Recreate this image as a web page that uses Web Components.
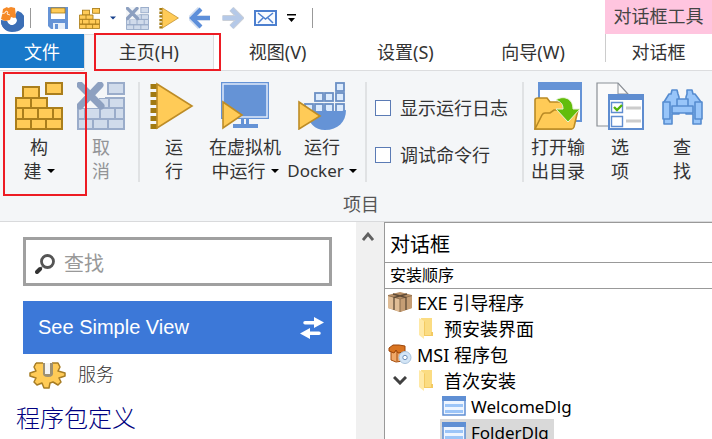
<!DOCTYPE html>
<html lang="zh-CN">
<head>
<meta charset="utf-8">
<title>对话框</title>
<style>
  html, body {
    margin: 0;
    height: 100%;
    overflow: hidden;
    background: #fff;
    font-family: "Noto Sans", "Noto Sans CJK SC", sans-serif;
    font-size: 18px;
    color: #333;
  }
</style>
</head>
<body>
<app-window></app-window>

<script>
const triangle = (points) =>
  `<polygon points="${points}" fill="#ffcb57" stroke="#bd8c26" stroke-width="1.6"/>`;

const lowerRows = `<path d="M1 26h46v11H1zM8 26v11M23 26v11M38 26v11M1 37h46v10H1zM16 37v10M31 37v10"/>`;

const dockerBoxes = [[38, 1], [17, 11], [27, 11], [38, 11], [7, 22], [17, 22], [27, 22], [38, 22]]
  .map(([x, y]) => `<rect x="${x}" y="${y}" width="8" height="8"/>`).join('');

const runIcon = `<path d="M4 2v45" stroke="#a17a12" stroke-width="7" stroke-dasharray="5 3"/>${triangle('7,2 42,24 7,46')}`;

/* [viewBox, markup] for each icon */
const ICONS = {
  logo: ['0 0 24 27', `
    <path d="M18 6a9.500 9.500 0 0 1-6 20A10 10 0 0 1 1 15l6 1a5 5 0 0 0 10-2l-2-4z" fill="#3c6fb6"/>
    <path d="M17 6q6 3 6 10a11 11 0 0 1-22 0l6 0a5 4.500 0 1 0 8-4z" fill="#3c6fb6"/>
    <path d="M3 4l4-2 1 1 3-1 4 1 1 9-2 1-3-1-1 3-5 1-4-2 1-4z" fill="#f68a28"/>
    <path d="M1 9l4-1 1-2 2 1-1 2 3 1" fill="none" stroke="#fff" stroke-width=".8"/>`],
  save: ['0 0 22 22', `
    <path d="M1 0h20v22H4l-3-3z" fill="#6593d6"/>
    <rect x="4" y="1" width="14" height="11" fill="#fff"/>
    <rect x="4" y="1" width="14" height="5" fill="#ffcb57" stroke="#a87b16" stroke-width=".8"/>
    <path d="M6 16h12v6H6z" fill="#e8f0fa"/><path d="M8 17h3v5H8z" fill="#6593d6"/>`],
  bricks: ['0 0 48 48', `<g fill="#ffcb57" stroke="#aa7e1c" stroke-width="2">
    <rect x="31" y="1" width="16" height="11"/><rect x="8" y="5" width="16" height="11"/>
    <path d="M1 16h31v10H1zM16 16v10"/>${lowerRows}</g>`],
  cancel: ['0 0 48 48', `<g fill="#d0dbeb" stroke="#9aacca" stroke-width="2">
    <rect x="31" y="1" width="16" height="11"/><path d="M1 16h46v10H1zM32 16v10"/>${lowerRows}</g>
    <path d="M0 0h28v16H22V26H0z" fill="#f4f6f8"/>
    <path d="M3 3l21 21M23 3L3 24" stroke="#8da0c0" stroke-width="7" stroke-linecap="round"/>`],
  run: ['0 0 48 48', runIcon],
  runSmall: ['0 0 43 48', runIcon],
  vm: ['0 0 48 48', `
    <path d="M0 0h48v37H0z" fill="#6593d6"/>
    <path d="M2 2h44v33H2z" fill="none" stroke="#dfeafa" stroke-width="1.5"/>
    <path d="M20 37h3v5h-3zM25 37h3v5h-3zM12 42h25v4H12z" fill="#6593d6"/>
    ${triangle('2,20 21,33 2,46')}`],
  docker: ['0 0 48 48', `
    <g fill="#dcebfd" stroke="#6b8fc4" stroke-width="1.8">${dockerBoxes}</g>
    <path d="M8 29h18l1-2 2 2h11c3 0 5 0 8-1c0 12-8 20-21 20C17 48 10 41 8 29z" fill="#6593d6"/>
    ${triangle('1,20 22,34 1,47')}`],
  output: ['0 0 48 48', `
    <path d="M5 1h42v38H5z" fill="#fff" stroke="#6593d6" stroke-width="2"/>
    <path d="M4 0h44v8H4z" fill="#6593d6"/>
    <path d="M1 47V18q0-2 3-2h9l3 4h19q2 0 2 3v24z" fill="#ffcb57" stroke="#b98a25" stroke-width="1.6"/>
    <path d="M1 47l7-14q1-2 3-2h5l4-3h24l-4 17q-1 2-2 2z" fill="#ffcb57" stroke="#b98a25" stroke-width="1.6"/>
    <path d="M22 18C29 13 39 16 39 27h7L34 40 22 27h7c0-5-2-7-7-9z" fill="#62bd0b" stroke="#e7f3d8" stroke-width="1"/>`],
  options: ['0 0 48 48', `
    <path d="M1 1h21l10 11v32H1z" fill="#fafafa" stroke="#8a8f96" stroke-width="1.2"/>
    <path d="M22 1v11h10" fill="none" stroke="#8a8f96"/>
    <path d="M13 13h34v34H13z" fill="#fff" stroke="#5f8dd0" stroke-width="2"/>
    <path d="M12 12h36v6H12z" fill="#5f8dd0"/>
    <path d="M15.500 20.500h11v10h-11zM15.500 34.500h11v10h-11z" fill="#fff" stroke="#5f8dd0" stroke-width="1.4"/>
    <path d="M18 25l3 3 5-5" fill="none" stroke="#55b40b" stroke-width="2.4"/>
    <path d="M30 26h15M30 39h15" stroke="#ccc" stroke-width="3"/>`],
  binoculars: ['0 0 48 48', `
    <g fill="#98c5f9" stroke="#568cd0" stroke-width="1.6" stroke-linejoin="round">
    <path d="M14 8h5l1 4 1 3v17H14v10H6V20l5-8h2zM29 8h5l1 4h2l6 8v22h-8V32h-7V15l1-3z"/>
    <path d="M5 20h7v17H5zM37 20h7v17h-7z"/>
    <path d="M14 24h21v7H14zM19 17h11v7H19z"/></g>`],
  back: ['0 0 22 22', `<path d="M11 2L2 11l9 9M2.500 11H21" fill="none" stroke="#d3deef" stroke-width="6"/>
    <path d="M12 2L3 11l9 9M3 11h18" fill="none" stroke="#5d8fda" stroke-width="4"/>`],
  forward: ['0 0 22 22', `<path d="M10 2l9 9-9 9M1 11h18" fill="none" stroke="#cbd0d8" stroke-width="6"/>
    <path d="M10 2l9 9-9 9M1 11h18" fill="none" stroke="#b5c9e8" stroke-width="4"/>`],
  mail: ['0 0 23 16', `<path d="M1 1h21v14H1z" fill="#f8fbff" stroke="#4c7fcf" stroke-width="2"/>
    <path d="M4 3l7.500 6L19 3M4 13l5-5M19 13l-5-5" fill="none" stroke="#4c7fcf" stroke-width="1.500"/>`],
  more: ['0 0 9 8', `<path d="M0 0h9v1.500H0zM1 4h7L4.500 8z" fill="#000"/>`],
  caret: ['0 0 8 4', `<path d="M0 0h8L4 4z" fill="currentColor"/>`],
  search: ['0 0 20 20', `<circle cx="12.500" cy="7.500" r="6" fill="#fff" stroke="#555" stroke-width="2.800"/>
    <path d="M7 13l-2 2" stroke="#777" stroke-width="2"/><path d="M5 15l-3 3" stroke="#333" stroke-width="4" stroke-linecap="round"/>`],
  swap: ['0 0 24 24', `<path d="M5 5h9V1l10 5.500-10 5.500V8.500H5a1.700 1.700 0 0 1 0-3.500zM19 19H10v4L0 17.500 10 12v3.500h9a1.700 1.700 0 0 1 0 3.500z" fill="#fff"/>`],
  gear: ['0 0 37 28', `<path d="M7 1h7v9h9V1l6 0 2 4-2 4 7 2v3l-6 2 2 4-3 3-5-3-3 1-1 5h-5l-2-5-5 2-3-3 2-4-6-2v-3l6-2-2-4z" fill="#ffcb57"/>
    <path d="M7 1h7M23 1h6l2 4-2 4 7 2v3l-6 2 2 4-3 3-5-3-3 1-1 5h-5l-2-5-5 2-3-3 2-4-6-2v-3l6-2-2-4 2-4" fill="none" stroke="#a77d25" stroke-width="1.500" stroke-linejoin="round"/>
    <path d="M14 1v9q-1 5 5 5t5-5V1z" fill="#9d9072"/><path d="M16 1h5v11h-5z" fill="#f4f4f4"/>`],
  up: ['0 0 12 9', `<path d="M1 8l5-6 5 6" fill="none" stroke="#606060" stroke-width="2.800"/>`],
  down: ['0 0 14 9', `<path d="M1 1l6 6 6-6" fill="none" stroke="#404040" stroke-width="3"/>`],
  box: ['0 0 24 22', `<path d="M0 4L12 1l12 3v13l-12 4L0 17z" fill="#b78f67"/>
    <path d="M0 5l12 3v13L0 17z" fill="#e0bd96"/><path d="M12 8l12-3v12l-12 4z" fill="#c59d74"/>
    <path d="M0 4.500L12 8l12-3.500" fill="none" stroke="#8a6c4c" stroke-width=".8"/>
    <path d="M5 3l13 3.500V19M19 3L6 6.500V19" fill="none" stroke="#5e4a36" stroke-width="1.300"/><path d="M12 8v13" stroke="#8a6c4c"/>`],
  package: ['0 0 24 22', `<path d="M3 8h12v10l-7 1-5-2z" fill="#f0a868" stroke="#a54d0c"/>
    <path d="M1 5l4-3h6l6 1 0 6-7 1-2-3-2 3-5-2z" fill="#d97420" stroke="#9c4508"/><path d="M9 9v9" stroke="#a54d0c"/>
    <circle cx="17" cy="14.500" r="6" fill="#d3e5f6" stroke="#a9c3dc"/><circle cx="17" cy="14.500" r="2.200" fill="#fff" stroke="#6c8fb8"/>`],
  folder: ['0 0 14 22', `<path d="M2 1h11v14h1v4H3z" fill="#fbdc82"/><path d="M0 1l5 3v18l-5-4z" fill="#ffe9a6"/><path d="M5 4v15h9v-4h-2v3H6V5z" fill="#f3ca62"/>`],
  dialog: ['0 0 24 20', `<path d="M1 1h22v18H1z" fill="#eef5ff" stroke="#5f8fd4" stroke-width="1.500"/>
    <path d="M0 0h24v5H0z" fill="#5f8fd4"/><path d="M3 8h18v3H3zM3 14h18v3H3z" fill="#9cc5f8"/>`]
};

/**
 * Base class: puts the markup from template() in an open shadow root.
 */
class BaseElement extends HTMLElement {
  connectedCallback() {
    if (!this.shadowRoot) {
      this.attachShadow({ mode: 'open' });
      this.shadowRoot.innerHTML = this.template();
    }
  }
}

/**
 * SVG icon, with its name, width and height given as attributes.
 */
class UiIcon extends BaseElement {
  template() {
    const [viewBox, markup] = ICONS[this.getAttribute('name')];
    const width = this.getAttribute('w');
    const height = this.getAttribute('h') || width;
    return `
      <style>
        :host { display: inline-block; flex: none; line-height: 0; }
        svg { display: block; }
      </style>
      <svg width="${width}" height="${height}" viewBox="${viewBox}" aria-hidden="true">${markup}</svg>
    `;
  }
}

/**
 * Row of small buttons over the tabs.
 */
class QuickAccess extends BaseElement {
  template() {
    return `
      <style>
        :host { display: flex; align-items: center; gap: 10px; height: 34px; padding-top: 2px; box-sizing: border-box; }
        button { border: 0; padding: 0; background: none; display: flex; color: #17408c; }
        .line { width: 1px; height: 20px; background: #999; }
        .line.start { margin: 0 6px 0 -4px; }
        .line.end { margin-left: 6px; }
      </style>
      <ui-icon name="logo" w="24" h="27"></ui-icon>
      <span class="line start"></span>
      <button aria-label="保存"><ui-icon name="save" w="22"></ui-icon></button>
      <button aria-label="构建"><ui-icon name="bricks" w="21"></ui-icon></button>
      <button aria-label="构建选项"><ui-icon name="caret" w="6" h="4"></ui-icon></button>
      <button aria-label="取消"><ui-icon name="cancel" w="23"></ui-icon></button>
      <button aria-label="运行"><ui-icon name="runSmall" w="20" h="22"></ui-icon></button>
      <button aria-label="后退"><ui-icon name="back" w="22"></ui-icon></button>
      <button aria-label="前进"><ui-icon name="forward" w="23" h="22"></ui-icon></button>
      <button aria-label="邮件"><ui-icon name="mail" w="23" h="16"></ui-icon></button>
      <button aria-label="更多"><ui-icon name="more" w="9" h="8"></ui-icon></button>
      <span class="line end"></span>
    `;
  }
}

/**
 * Tab of the ribbon. Attributes: file, active, marked, context.
 */
class RibbonTab extends BaseElement {
  template() {
    return `
      <style>
        :host { display: block; flex: 1; box-sizing: border-box; min-width: 0; position: relative; border-bottom: 1px solid #dcdddf; }
        button { width: 100%; height: 36px; padding: 0 0 2px; border: 0; background: none; font: inherit; color: inherit; white-space: nowrap; }
        :host([file]) { flex: 0 0 84px; }
        :host([file]) button { height: 34px; padding: 0; background: #1979ca; color: #fff; }
        :host([active]) { background: #f4f6f8; border: 1px solid #dcdddf; border-bottom-color: #f4f6f8; }
        :host([active]) button { height: 35px; padding-bottom: 3px; }
        :host([context]) { flex: none; }
        :host([context])::before { content: ""; position: absolute; left: 0; width: 1px; height: 28px; background: #ccc; }
        /* highlight frame over the tab */
        :host([marked])::after {
          content: ""; position: absolute; box-sizing: border-box; z-index: 1;
          left: 9px; right: -8px; top: -2px; height: 38px; border: 2px solid #ed1c24; pointer-events: none;
        }
      </style>
      <button role="tab"><slot></slot></button>
    `;
  }
}

/**
 * Large ribbon button with an icon over a label of two lines.
 */
class RibbonButton extends BaseElement {
  template() {
    const caret = this.hasAttribute('menu') ? '<ui-icon name="caret" w="8" h="4"></ui-icon>' : '';
    return `
      <style>
        :host { display: block; position: relative; flex: none; width: 62px; }
        :host([wide]) { width: 80px; }
        :host([medium]) { width: 74px; }
        button {
          display: flex; flex-direction: column; align-items: center; width: 100%;
          padding: 0; border: 0; background: none; font: inherit; line-height: 24px; color: #333; white-space: nowrap;
        }
        button:disabled { color: #929497; }
        .top { margin-top: 5px; }
        .bottom { display: flex; align-items: center; gap: 5px; height: 24px; }
        .bottom ui-icon { color: #000; }
        :host([medium]) .bottom { font-size: 17px; }
        :host([marked])::after {
          content: ""; position: absolute; box-sizing: border-box; z-index: 1;
          left: -5px; right: -17px; top: -10px; height: 124px; border: 2px solid #ed1c24; pointer-events: none;
        }
      </style>
      <button ${this.hasAttribute('disabled') ? 'disabled' : ''}>
        <ui-icon name="${this.getAttribute('icon')}" w="48"></ui-icon>
        <span class="top"><slot></slot></span>
        <span class="bottom"><slot name="second"></slot>${caret}</span>
      </button>
    `;
  }
}

class RibbonCheck extends BaseElement {
  template() {
    return `
      <style>
        :host { display: block; }
        label { display: flex; align-items: center; gap: 9px; line-height: 24px; white-space: nowrap; }
        input { appearance: none; margin: 0; width: 16px; height: 16px; border: 1px solid #5b7bb5; background: #fff; }
        input:checked { background: #5b7bb5; }
      </style>
      <label><input type="checkbox"><slot></slot></label>
    `;
  }
}

class RibbonPanel extends BaseElement {
  template() {
    return `
      <style>
        :host { display: block; padding-top: 11px; background: #f4f6f8; border-bottom: 1px solid #d9dadc; }
        .tools { display: flex; height: 100px; padding-left: 8px; }
        .line { flex: none; width: 2px; height: 100px; margin: 0 3px 0 6px; background: #e0e2e4; }
        .checks { display: flex; flex-direction: column; gap: 23px; flex: none; box-sizing: border-box; width: 146px; padding: 14px 0 0 5px; }
        .name { padding: 10px 0 4px 10px; text-align: center; line-height: 25px; color: #555; }
      </style>
      <div class="tools">
        <ribbon-button icon="bricks" menu marked>构<span slot="second">建</span></ribbon-button>
        <ribbon-button icon="cancel" disabled>取<span slot="second">消</span></ribbon-button>
        <span class="line"></span>
        <ribbon-button icon="run">运<span slot="second">行</span></ribbon-button>
        <ribbon-button icon="vm" wide menu>在虚拟机<span slot="second">中运行</span></ribbon-button>
        <ribbon-button icon="docker" medium menu>运行<span slot="second">Docker</span></ribbon-button>
        <span class="line"></span>
        <div class="checks">
          <ribbon-check>显示运行日志</ribbon-check>
          <ribbon-check>调试命令行</ribbon-check>
        </div>
        <span class="line"></span>
        <ribbon-button icon="output">打开输<span slot="second">出目录</span></ribbon-button>
        <ribbon-button icon="options">选<span slot="second">项</span></ribbon-button>
        <ribbon-button icon="binoculars">查<span slot="second">找</span></ribbon-button>
      </div>
      <div class="name">项目</div>
    `;
  }
}

/**
 * Left pane: search box, view switch and project links.
 */
class ProjectNav extends BaseElement {
  template() {
    return `
      <style>
        :host { display: flex; min-width: 0; }
        .content { flex: 1; min-width: 0; padding: 15px 24px 0 23px; }
        .search { display: flex; align-items: center; gap: 9px; height: 43px; padding-left: 9px; border: 3px solid #a0a0a0; }
        .search ui-icon { padding-top: 5px; }
        input { flex: 1; min-width: 0; border: 0; outline: 0; padding: 3px 0 0; background: none; font: inherit; font-size: 20px; color: #333; }
        input::placeholder { color: #999; opacity: 1; }
        .switch {
          display: flex; align-items: center; justify-content: space-between; width: 100%; height: 53px; margin-top: 15px;
          padding: 0 8px 0 15px; border: 0; background: #3c78d8; color: #fff; font: 20px "Liberation Sans", Arial, sans-serif;
        }
        a { display: flex; gap: 12px; margin: 8px 0 0 6px; color: #333; font-weight: 300; line-height: 24px; text-decoration: none; }
        h2 { margin: 10px 0 0 -7px; font-size: 24px; font-weight: 300; line-height: 36px; color: #000080; }
        .scroll { flex: none; width: 28px; padding: 10px 0 0 6px; box-sizing: border-box; background: #f0f0f0; }
        .scroll button { display: flex; padding: 0; border: 0; background: none; }
      </style>
      <div class="content">
        <label class="search">
          <ui-icon name="search" w="20"></ui-icon>
          <input type="text" placeholder="查找" aria-label="查找">
        </label>
        <button class="switch">See Simple View <ui-icon name="swap" w="24"></ui-icon></button>
        <a href="#services"><ui-icon name="gear" w="37" h="28"></ui-icon>服务</a>
        <h2>程序包定义</h2>
      </div>
      <div class="scroll"><button aria-label="向上滚动"><ui-icon name="up" w="12" h="9"></ui-icon></button></div>
    `;
  }
}

/**
 * Tree row. Attributes: icon, level, open, selected.
 */
class TreeItem extends BaseElement {
  template() {
    const level = this.getAttribute('level');
    const isFolder = level === '1';
    const isOpen = this.hasAttribute('open');
    return `
      <style>
        :host { display: flex; align-items: center; height: 26px; padding-left: 3px; color: #000; white-space: nowrap; }
        :host([level="1"]) { padding-left: 34px; }
        :host([level="1"][open]) { padding-left: 8px; }
        :host([level="2"]) { padding-left: 55px; font-size: 17px; }
        .row { display: flex; align-items: center; gap: 5px; height: 26px; padding: 0 5px 0 2px; }
        :host([level="0"]) .row { padding-left: 0; }
        :host([level="1"]) .row { padding-left: 0; gap: 11px; }
        :host([selected]) .row { background: #d9d9d9; }
        .arrow { margin-right: 12px; }
      </style>
      ${isOpen ? '<ui-icon class="arrow" name="down" w="14" h="9"></ui-icon>' : ''}
      <span class="row">
        <ui-icon name="${this.getAttribute('icon')}" w="${isFolder ? 14 : 24}" h="22"></ui-icon>
        <slot></slot>
      </span>
    `;
  }
}

class DialogTree extends BaseElement {
  template() {
    return `
      <style>
        :host { display: block; min-width: 0; border-left: 1px solid #999; border-top: 1px solid #999; color: #000; }
        h1, h2 { margin: 0; padding-left: 5px; font-weight: 400; border-bottom: 1px solid #999; }
        h1 { font-size: 20px; line-height: 35px; padding-top: 4px; }
        h2 { font-size: 16px; line-height: 25px; }
      </style>
      <h1>对话框</h1>
      <h2>安装顺序</h2>
      <div role="tree">
        <tree-item role="treeitem" level="0" icon="box">EXE 引导程序</tree-item>
        <tree-item role="treeitem" level="1" icon="folder">预安装界面</tree-item>
        <tree-item role="treeitem" level="0" icon="package">MSI 程序包</tree-item>
        <tree-item role="treeitem" level="1" icon="folder" open>首次安装</tree-item>
        <tree-item role="treeitem" level="2" icon="dialog">WelcomeDlg</tree-item>
        <tree-item role="treeitem" level="2" icon="dialog" selected>FolderDlg</tree-item>
      </div>
    `;
  }
}

class AppWindow extends BaseElement {
  template() {
    return `
      <style>
        :host { display: flex; flex-direction: column; min-height: 100vh; }
        .head { display: grid; grid-template-columns: 1fr 107px; }
        .context { background: #ffc5df; line-height: 32px; text-align: center; color: #444; white-space: nowrap; }
        .tabs { display: flex; padding-right: 8px; box-shadow: inset 0 -1px #dcdddf; }
        main { flex: 1; display: grid; grid-template-columns: minmax(300px, 384px) 1fr; }
      </style>
      <header class="head">
        <quick-access></quick-access>
        <div class="context">对话框工具</div>
        <nav class="tabs">
          <ribbon-tab file>文件</ribbon-tab>
          <ribbon-tab active marked>主页(H)</ribbon-tab>
          <ribbon-tab>视图(V)</ribbon-tab>
          <ribbon-tab>设置(S)</ribbon-tab>
          <ribbon-tab>向导(W)</ribbon-tab>
        </nav>
        <ribbon-tab context>对话框</ribbon-tab>
      </header>
      <ribbon-panel></ribbon-panel>
      <main>
        <project-nav></project-nav>
        <dialog-tree></dialog-tree>
      </main>
    `;
  }
}

customElements.define('ui-icon', UiIcon);
customElements.define('quick-access', QuickAccess);
customElements.define('ribbon-tab', RibbonTab);
customElements.define('ribbon-button', RibbonButton);
customElements.define('ribbon-check', RibbonCheck);
customElements.define('ribbon-panel', RibbonPanel);
customElements.define('project-nav', ProjectNav);
customElements.define('tree-item', TreeItem);
customElements.define('dialog-tree', DialogTree);
customElements.define('app-window', AppWindow);
</script>
</body>
</html>
